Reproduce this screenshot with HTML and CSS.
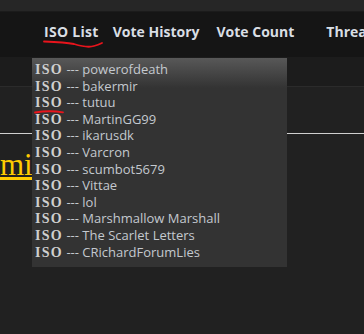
FILE: index.html
```html
<!DOCTYPE html>
<html lang="en">
<head>
    <meta charset="UTF-8">
    <title>ISO List</title>
    <link rel="stylesheet" href="styles.css">
</head>
<body>

    <!-- Top strip -->
    <div class="topstrip"></div>

    <!-- Navbar -->
    <nav class="navbar">
        <a class="nav-item nav-iso">ISO List</a>
        <a class="nav-item nav-history">Vote History</a>
        <a class="nav-item nav-count">Vote Count</a>
        <a class="nav-item nav-thread">Thread</a>
    </nav>
    <div class="subbar"></div>

    <!-- Content -->
    <div class="content">
        <hr class="rule">
        <a class="title">mi</a>
    </div>

    <!-- ISO dropdown -->
    <ul class="iso-menu">
        <li><b>ISO</b> --- powerofdeath</li>
        <li><b>ISO</b> --- bakermir</li>
        <li><b>ISO</b> --- tutuu</li>
        <li><b>ISO</b> --- MartinGG99</li>
        <li><b>ISO</b> --- ikarusdk</li>
        <li><b>ISO</b> --- Varcron</li>
        <li><b>ISO</b> --- scumbot5679</li>
        <li><b>ISO</b> --- Vittae</li>
        <li><b>ISO</b> --- lol</li>
        <li><b>ISO</b> --- Marshmallow Marshall</li>
        <li><b>ISO</b> --- The Scarlet Letters</li>
        <li><b>ISO</b> --- CRichardForumLies</li>
    </ul>

    <!-- red pen marks -->
    <svg class="marks" width="364" height="334" viewBox="0 0 364 334">
        <path d="M44 41.5 C56 42 66 42.5 74 44 C82 46.5 88 48 94 46 C98 45 100 44 102 43" />
        <path d="M35 112.5 C44 111 54 110.8 63 112.3" />
    </svg>

</body>
</html>
```

FILE: styles.css
```css
body {
    margin: 0;
    padding: 0;
    width: 364px;
    height: 334px;
    overflow: hidden;
    background: #212121;
    font-family: "Open Sans", Arial, sans-serif;
    position: relative;
}

.topstrip {
    height: 11px;
    background: #262626;
    border-bottom: 1px solid #1b1b1b;
}

.navbar {
    height: 45px;
    background: #151515;
    display: flex;
    align-items: flex-start;
    padding: 10px 0 0 44px;
    box-sizing: border-box;
    white-space: nowrap;
}

.nav-item {
    color: #d9dee4;
    font-weight: bold;
    font-size: 14px;
    line-height: 20px;
}

.nav-iso {
    letter-spacing: 0.3px;
}

.nav-history {
    margin-left: 14px;
}

.nav-count {
    margin-left: 17px;
}

.nav-thread {
    margin-left: 32px;
}

.subbar {
    height: 29px;
    background: #1c1c1c;
    border-bottom: 1px solid #2b2b2b;
}

.content {
    padding-top: 46px;
}

.rule {
    margin: 0;
    border: none;
    height: 1px;
    background: #cfcfcf;
}

.title {
    display: inline-block;
    margin-top: 14px;
    font-family: "Liberation Serif", "Times New Roman", serif;
    font-size: 31px;
    line-height: 34px;
    color: #ffcc00;
    text-decoration: underline;
}

.iso-menu {
    position: absolute;
    left: 32px;
    top: 58px;
    width: 255px;
    height: 209px;
    margin: 0;
    padding: 3px 0 0 3px;
    box-sizing: border-box;
    list-style: none;
    background: linear-gradient(#585858, #333 30px, #333);
}

.iso-menu li {
    height: 16.6px;
    line-height: 16.6px;
    font-size: 13px;
    color: #c4c9cf;
    white-space: nowrap;
}

.iso-menu b {
    font-family: "Liberation Serif", "Times New Roman", serif;
    font-size: 14px;
    letter-spacing: 1.3px;
    color: #cfcfcf;
}

.marks {
    position: absolute;
    left: 0;
    top: 0;
    pointer-events: none;
}

.marks path {
    fill: none;
    stroke: #e8141c;
    stroke-width: 1.8;
    stroke-linecap: round;
}
```
